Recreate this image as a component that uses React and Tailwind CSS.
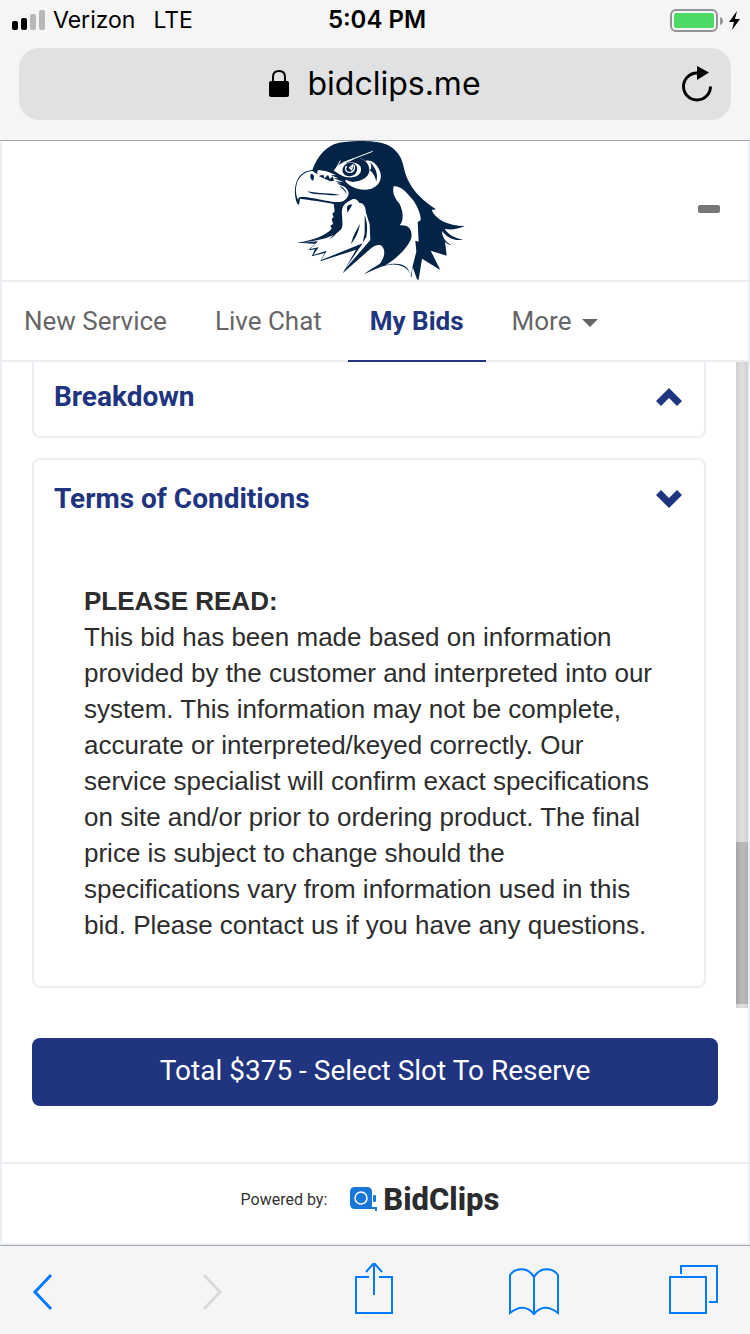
import React, { useState } from 'react';

const tabs = ['New Service', 'Live Chat', 'My Bids', 'More'];

const FalconLogo = () => (
    <svg viewBox="27 16 516 417" className="h-[139px] w-[172px]" role="img" aria-label="Falcon">
        <g fill="#032447">
            <path d="M85 103C100 62 122 38 152 25C185 15 235 15 270 18C307 20 335 36 350 66C362 94 360 113 378 144C392 170 415 193 456 221L443 223C454 250 490 271 542 271C520 281 500 284 482 279C493 297 512 307 537 312C509 318 486 302 474 286C474 305 486 320 503 329C493 327 486 321 483 318L488 360L440 345L469 403L414 369L404 432L399 431L386 394L382 426L376 410C365 390 335 382 308 389C286 394 265 405 240 416C264 397 280 391 289 383C300 367 306 346 295 333C287 325 275 328 262 337L176 413L216 342L109 377L122 352L83 362L93 341L73 344L94 324L38 321C94 313 128 297 143 279L139 270L147 265L143 250L149 244L145 235L152 227L149 205C120 198 75 193 48 189L45 208L39 203C29 177 31 147 43 127C53 111 70 104 85 103Z" />
        </g>
        <g fill="#fff">
            <path d="M86 106C63 107 48 121 40 139C34 158 34 174 42 192C45 182 50 184 77 186C112 190 142 201 169 199C183 197 192 187 194 173C193 159 180 151 168 148L158 142L171 144L153 136L180 140L148 127L163 128L140 118L157 119L128 107L104 103C98 107 99 112 102 116C95 113 90 109 86 106Z" />
            <path d="M205 191C215 188 223 195 226 202C239 200 245 214 246 231L257 266L259 313L181 403L236 323L112 373L128 345L88 358L104 335L79 340L102 317L52 321C109 315 149 304 169 283C175 279 176 268 175 259C176 244 170 230 177 213C184 201 194 198 205 191Z" />
            <path d="M329 152C351 148 373 176 390 197C402 218 411 237 410 253L401 260L404 318L394 315L397 348L386 391L380 423C374 386 349 379 305 388C329 374 370 341 382 307C386 278 371 267 347 269C359 255 359 231 347 205C331 187 324 171 329 152Z" />
            <path d="M149 105C162 84 185 75 214 66C204 76 193 77 181 84C200 76 219 80 229 92C237 110 222 127 197 125C176 125 163 112 149 105Z" />
            <path d="M226 67C247 73 257 89 256 106C254 126 231 137 205 139L185 132C180 137 193 146 206 154C236 168 269 163 283 144C298 124 289 100 273 84C264 76 253 73 245 76C238 71 231 68 226 67Z" />
        </g>
        <g fill="#032447">
            <path d="M81 114C91 114 92 126 87 135C79 132 77 122 81 114Z" />
            <path d="M70 167C103 174 139 172 168 178C144 181 127 177 103 176C88 175 77 173 70 167Z" />
            <path d="M167 151C179 155 187 165 188 176C180 162 176 160 167 151Z" />
            <path d="M258 79C275 96 283 115 277 137C272 120 267 110 256 103C264 101 263 91 258 79Z" />
            <path d="M187 84C171 96 173 111 184 119C203 127 223 115 219 95C214 80 200 77 187 84Z" />
            <path d="M189 218C188 210 196 205 205 207C200 215 195 224 190 231Z" />
            <path d="M242 238C250 260 251 280 247 304L236 321L242 292Z" />
            <path d="M228 264C224 290 214 307 201 326C207 298 217 286 228 264Z" />
            <path d="M164 281C157 297 148 304 134 312C147 299 154 293 164 281Z" />
            <path d="M104 121L118 117L121 128L132 118L138 130L146 122L150 135L139 137Z" />
        </g>
        <path d="M188 91C180 101 187 111 199 110C209 109 214 99 210 88M197 96L206 88L203 102Z" fill="none" stroke="#fff" strokeWidth="4" />
        <path d="M169 75L157 97L181 80L266 47" fill="none" stroke="#fff" strokeWidth="3" />
    </svg>
);

const StatusBar = () => (
    <div className="grid h-10 grid-cols-3 items-center pl-3 pr-2 font-['Inter',sans-serif] text-[23px] leading-10 text-black">
        <div className="flex items-center gap-2">
            <svg viewBox="0 0 33 20" className="h-5 w-[33px]" aria-hidden="true">
                <rect x="0" y="11" width="6" height="9" rx="2" />
                <rect x="9" y="8" width="6" height="12" rx="2" />
                <rect x="18" y="4" width="6" height="16" rx="2" fill="#b8b8b8" />
                <rect x="27" y="0" width="6" height="20" rx="2" fill="#b8b8b8" />
            </svg>
            <span>Verizon</span>
            <span className="ml-2.5">LTE</span>
        </div>
        <div className="text-center text-2xl font-semibold leading-10">5:04 PM</div>
        <svg viewBox="0 0 72 24" className="h-6 w-[72px] justify-self-end" aria-hidden="true">
            <rect x="1" y="2" width="46" height="21" rx="5" fill="none" stroke="#949494" strokeWidth="2" />
            <rect x="4" y="5" width="40" height="15" rx="2" fill="#4cd964" />
            <path d="M50 9Q53 10 53 13T50 17Z" fill="#949494" />
            <path d="M67 3L59 14H64L62 22L70 11H65Z" />
        </svg>
    </div>
);

const AddressBar = () => (
    <div className="px-[19px] pb-5 pt-2">
        <div className="grid h-[72px] grid-cols-[1fr_auto_1fr] items-center rounded-[20px] bg-[#e0e1e3] px-[18px]">
            <span />
            <div className="flex items-center gap-[18px] text-black">
                <svg viewBox="0 0 20 28" className="h-7 w-5" aria-hidden="true">
                    <rect x="0" y="11" width="20" height="16" rx="2" />
                    <path d="M4 12V7Q4 1 10 1T16 7V12" fill="none" stroke="#000" strokeWidth="2" />
                </svg>
                <span className="font-['Inter',sans-serif] text-[32px] leading-10">bidclips.me</span>
            </div>
            <button type="button" aria-label="Reload" className="justify-self-end">
                <svg viewBox="0 0 32 36" className="h-9 w-8">
                    <path d="M16 7A13.500 13.500 0 1 0 29.500 20.500" fill="none" stroke="#000" strokeWidth="3" />
                    <path d="M16 0L28 6.500L16 14Z" />
                </svg>
            </button>
        </div>
    </div>
);

const Chevron = ({ open }) => (
    <svg viewBox="0 0 26 18" className={`h-[18px] w-[26px] ${open ? '' : 'rotate-180'}`} aria-hidden="true">
        <path d="M5 0L13 8L21 0L26 5L13 18L0 5Z" fill="#20347f" />
    </svg>
);

const ToolbarButton = ({ label, disabled, children }) => (
    <button type="button" aria-label={label} disabled={disabled} className={disabled ? 'text-[#d9d9d9]' : 'text-[#007aff]'}>
        <svg viewBox="0 0 52 56" className="h-14 w-[52px]" fill="none" stroke="currentColor" strokeWidth="2">
            {children}
        </svg>
    </button>
);

const App = () => {
    const [active, setActive] = useState('My Bids');

    return (
        <div className="flex min-h-screen flex-col bg-[#f5f5f5] font-['Roboto',sans-serif]">
            <header className="border-b border-[#a2a8ad]">
                <StatusBar />
                <AddressBar />
            </header>

            <main className="flex grow flex-col border-x-2 border-[#ebeff4] bg-white">
                <div className="grid grid-cols-[1fr_auto_1fr] items-center border-b-2 border-[#ebeff4] pl-9 pr-7">
                    <span />
                    <FalconLogo />
                    <button type="button" aria-label="Minimize" className="justify-self-end pb-1">
                        <span className="block h-2 w-[22px] rounded-xs bg-[#777]" />
                    </button>
                </div>

                <nav className="flex h-20 gap-1 border-b-2 border-[#ebeff4] text-[26px] leading-10">
                    {tabs.map((tab) => (
                        <button
                            key={tab}
                            type="button"
                            onClick={() => setActive(tab)}
                            className={`-mb-0.5 flex items-center border-b-2 px-[22px] ${active === tab ? 'border-[#20347f] font-bold text-[#20347f]' : 'border-transparent text-[#666]'}`}
                        >
                            {tab}
                            {tab === 'More' && (
                                <svg viewBox="0 0 16 8" className="ml-[11px] mt-1 h-2 w-4" fill="#666" aria-hidden="true">
                                    <path d="M0 0H16L8 8Z" />
                                </svg>
                            )}
                        </button>
                    ))}
                </nav>

                <div className="flex">
                    <div className="min-w-0 grow px-[30px] pb-5">
                        <section className="rounded-b-lg border-2 border-t-0 border-[#ebeff4]">
                            <button type="button" className="flex h-[74px] w-full items-center justify-between pb-1 pl-5 pr-[22px]">
                                <span className="text-[28px] font-bold leading-8 text-[#20347f]">Breakdown</span>
                                <Chevron />
                            </button>
                        </section>
                        <section className="mt-5 rounded-lg border-2 border-[#ebeff4]">
                            <button type="button" className="flex h-20 w-full items-center justify-between pb-0.5 pl-5 pr-[22px]">
                                <span className="text-[28px] font-bold leading-8 text-[#20347f]">Terms of Conditions</span>
                                <Chevron open />
                            </button>
                            <div className="px-[50px] py-[43px] font-['Liberation_Sans',sans-serif] text-[26px] leading-9 text-[#2d2d2d]">
                                <h2 className="font-bold">PLEASE READ:</h2>
                                <p>
                                    This bid has been made based on information provided by the customer and interpreted into our system. This
                                    information may not be complete, accurate or interpreted/keyed correctly. Our service specialist will confirm
                                    exact specifications on site and/or prior to ordering product. The final price is subject to change should the
                                    specifications vary from information used in this bid. Please contact us if you have any questions.
                                </p>
                            </div>
                        </section>
                    </div>
                    <div className="flex w-3 shrink-0 flex-col justify-end bg-linear-to-r from-[#d0d0d0] via-[#e0e0e0] to-[#d0d0d0] pb-1">
                        <div className="h-[162px] bg-linear-to-r from-[#a6a6a6] via-[#bbb] to-[#b0b0b0]" />
                    </div>
                </div>

                <div className="grow px-[30px] pb-14 pt-[30px]">
                    <button type="button" className="h-[68px] w-full rounded-lg bg-[#20347f] pb-0.5 text-[28px] leading-8 text-white">
                        Total $375 - Select Slot To Reserve
                    </button>
                </div>

                <footer className="flex h-[83px] items-center justify-center border-b-2 border-t-2 border-[#ebeff4] pb-2 pr-2.5">
                    <span className="text-base text-[#333]">Powered by:</span>
                    <svg viewBox="0 0 27 26" className="ml-[23px] h-[26px] w-[27px]" aria-hidden="true">
                        <path d="M5 0H17Q22 0 22 5V20H27V24H25V22H5Q0 22 0 17V5Q0 0 5 0Z" fill="#1976d9" />
                        <circle cx="11" cy="11" r="6" fill="none" stroke="#fff" strokeWidth="1.500" />
                        <rect x="23" y="8" width="3" height="7" rx="1" fill="#1976d9" />
                    </svg>
                    <span className="ml-1.5 text-[31px] font-extrabold leading-9 text-[#2b2c2e]">BidClips</span>
                </footer>
            </main>

            <nav className="flex h-[89px] items-center justify-between border-t border-[#a2a8ad] px-[30px] pt-0.5">
                <ToolbarButton label="Back">
                    <path d="M21 12L5 29L21 46" strokeWidth="3" />
                </ToolbarButton>
                <ToolbarButton label="Forward" disabled>
                    <path d="M14 12L30 29L14 46" strokeWidth="3" />
                </ToolbarButton>
                <ToolbarButton label="Share">
                    <path d="M20 14H7V50H43V14H30M25 32V0M17 9L25 0L33 9" />
                </ToolbarButton>
                <ToolbarButton label="Bookmarks">
                    <path d="M25 51V14C19 4 7 4 1 12V50Q15 39 25 51Q35 39 49 50V12C43 4 31 4 25 14" />
                </ToolbarButton>
                <ToolbarButton label="Tabs">
                    <path d="M2 14H38V50H2ZM13 11V3H49V39H41" />
                </ToolbarButton>
            </nav>
        </div>
    );
};

export default App;
